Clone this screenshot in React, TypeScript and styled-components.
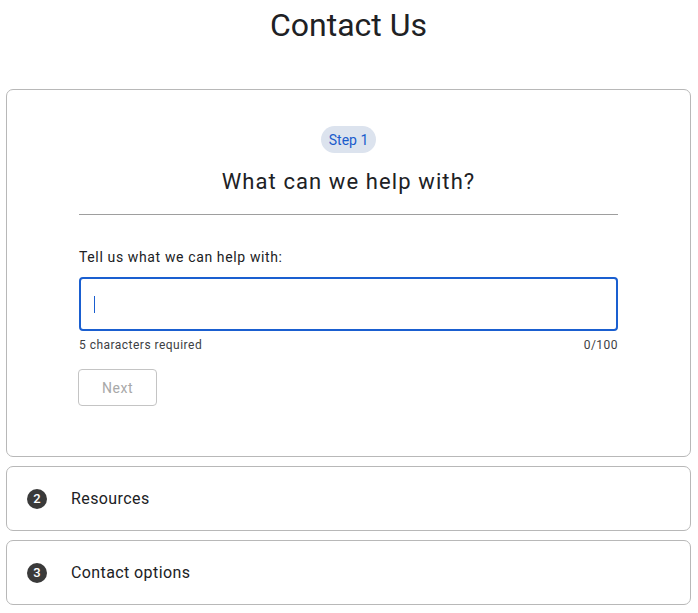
import React from "react";
import styled, { createGlobalStyle } from "styled-components";

const Global = createGlobalStyle`
  html, body { margin: 0; padding: 0; background: #fff; }
  body { font-family: Roboto, "Noto Sans", Arial, sans-serif; color: #202124; }
  * { box-sizing: border-box; }
`;

const Page = styled.div`
  display: flex;
  flex-direction: column;
  padding: 0 7px 0 6px;
`;

const Title = styled.h1`
  margin: 0;
  height: 89px;
  padding-top: 4px;
  font-size: 32px;
  line-height: 42px;
  font-weight: 400;
  text-align: center;
  color: #202124;
`;

const Stack = styled.div`
  display: flex;
  flex-direction: column;
  gap: 9px;
`;

const Card = styled.section`
  border: 1px solid #b8b8b8;
  border-radius: 7px;
  background: #fff;
`;

const StepBody = styled.div`
  display: flex;
  flex-direction: column;
  align-items: center;
  padding: 36px 72px 50px 72px;
`;

const Pill = styled.span`
  display: inline-flex;
  align-items: center;
  height: 27px;
  padding: 0 8px;
  border-radius: 14px;
  background: #dce3ee;
  color: #1a5ccc;
  font-size: 14px;
`;

const Heading = styled.h2`
  margin: 14px 0 0 0;
  font-size: 22px;
  line-height: 30px;
  font-weight: 400;
  letter-spacing: 0.05em;
  color: #202124;
`;

const Divider = styled.hr`
  align-self: stretch;
  margin: 17px 0 0 0;
  border: none;
  border-top: 1px solid #9e9e9e;
`;

const Form = styled.div`
  align-self: stretch;
  display: flex;
  flex-direction: column;
  padding-top: 33px;
`;

const Label = styled.label`
  font-size: 14px;
  line-height: 18px;
  letter-spacing: 0.045em;
  color: #202124;
`;

const InputBox = styled.div`
  margin-top: 11px;
  height: 54px;
  border: 2px solid #1a5fd0;
  border-radius: 4px;
  display: flex;
  align-items: center;
  padding-left: 13px;
`;

const Caret = styled.span`
  width: 1px;
  height: 17px;
  background: #1a5fd0;
`;

const HelperRow = styled.div`
  display: flex;
  justify-content: space-between;
  margin-top: 6px;
  font-size: 12px;
  line-height: 16px;
  letter-spacing: 0.04em;
  color: #3c4043;
`;

const NextButton = styled.button`
  align-self: flex-start;
  margin: 16px 0 0 -1px;
  width: 79px;
  height: 37px;
  border: 1px solid #c4c4c4;
  border-radius: 4px;
  background: #fff;
  color: #a8a8a8;
  font-family: inherit;
  font-size: 14px;
  letter-spacing: 0.04em;
`;

const CollapsedCard = styled(Card)`
  height: 65px;
  display: flex;
  align-items: center;
  padding-left: 20px;
  gap: 24px;
`;

const Num = styled.span`
  width: 20px;
  height: 20px;
  border-radius: 50%;
  background: #3a3a3a;
  color: #fff;
  font-size: 13px;
  font-weight: 500;
  display: flex;
  align-items: center;
  justify-content: center;
`;

const CardTitle = styled.span`
  font-size: 16px;
  letter-spacing: 0.025em;
  color: #202124;
`;

export default function App() {
  return (
    <Page>
      <Global />
      <Title>Contact Us</Title>
      <Stack>
        <Card>
          <StepBody>
            <Pill>Step 1</Pill>
            <Heading>What can we help with?</Heading>
            <Divider />
            <Form>
              <Label>Tell us what we can help with:</Label>
              <InputBox>
                <Caret />
              </InputBox>
              <HelperRow>
                <span>5 characters required</span>
                <span>0/100</span>
              </HelperRow>
              <NextButton disabled>Next</NextButton>
            </Form>
          </StepBody>
        </Card>
        <CollapsedCard>
          <Num>2</Num>
          <CardTitle>Resources</CardTitle>
        </CollapsedCard>
        <CollapsedCard>
          <Num>3</Num>
          <CardTitle>Contact options</CardTitle>
        </CollapsedCard>
      </Stack>
    </Page>
  );
}
